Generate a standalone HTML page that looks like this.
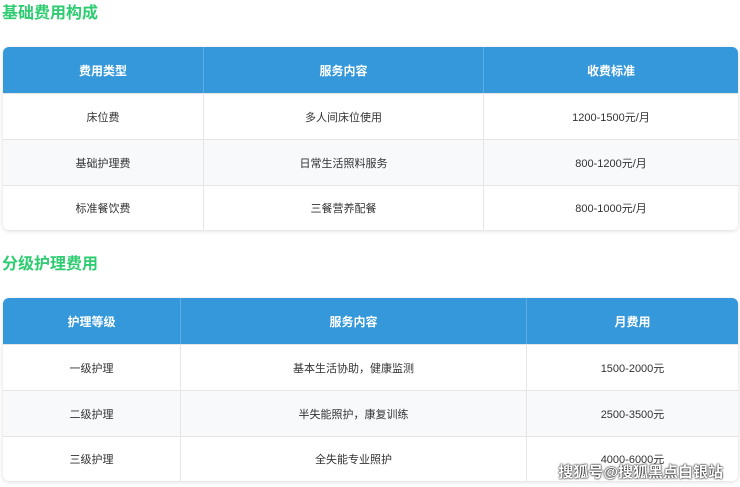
<!DOCTYPE html>
<html><head><meta charset="utf-8"><style>
body{margin:0;width:740px;height:487px;background:#fff;font-family:"Liberation Sans","Noto Sans CJK SC",sans-serif;position:relative;overflow:hidden}
h2{position:absolute;left:2px;margin:0;font-size:16px;color:#2ecc71;font-weight:bold;line-height:20px}
table{position:absolute;left:3px;width:735px;border-collapse:separate;border-spacing:0;border-radius:6px;overflow:hidden;box-shadow:0 1px 4px rgba(0,0,0,.15);font-size:11px;color:#333}
th{background:#3498db;color:#fff;font-weight:bold;height:46px;border-right:1px solid #5dade2;padding:0;font-size:12px}
td{text-align:center;border-right:1px solid #e5e5e5;border-top:1px solid #e5e5e5;padding:0}
th:last-child,td:last-child{border-right:none}
tr:nth-child(odd) td{background:#f7f9fb}
.wm{position:absolute;right:17px;bottom:5px;color:#fff;font-size:15px;font-weight:bold;text-shadow:0 0 2px #000,0 0 1px #000}
</style></head><body>
<h2 style="top:4px">基础费用构成</h2>
<table style="top:47px">
<tr><th style="width:200px">费用类型</th><th style="width:279px">服务内容</th><th>收费标准</th></tr>
<tr><td style="height:45px">床位费</td><td>多人间床位使用</td><td>1200-1500元/月</td></tr>
<tr><td style="height:45px">基础护理费</td><td>日常生活照料服务</td><td>800-1200元/月</td></tr>
<tr><td style="height:44px">标准餐饮费</td><td>三餐营养配餐</td><td>800-1000元/月</td></tr>
</table>
<h2 style="top:255px">分级护理费用</h2>
<table style="top:298px">
<tr><th style="width:177px">护理等级</th><th style="width:345px">服务内容</th><th>月费用</th></tr>
<tr><td style="height:45px">一级护理</td><td>基本生活协助，健康监测</td><td>1500-2000元</td></tr>
<tr><td style="height:45px">二级护理</td><td>半失能照护，康复训练</td><td>2500-3500元</td></tr>
<tr><td style="height:44px">三级护理</td><td>全失能专业照护</td><td>4000-6000元</td></tr>
</table>
<div class="wm">搜狐号@搜狐黑点白银站</div>
</body></html>
